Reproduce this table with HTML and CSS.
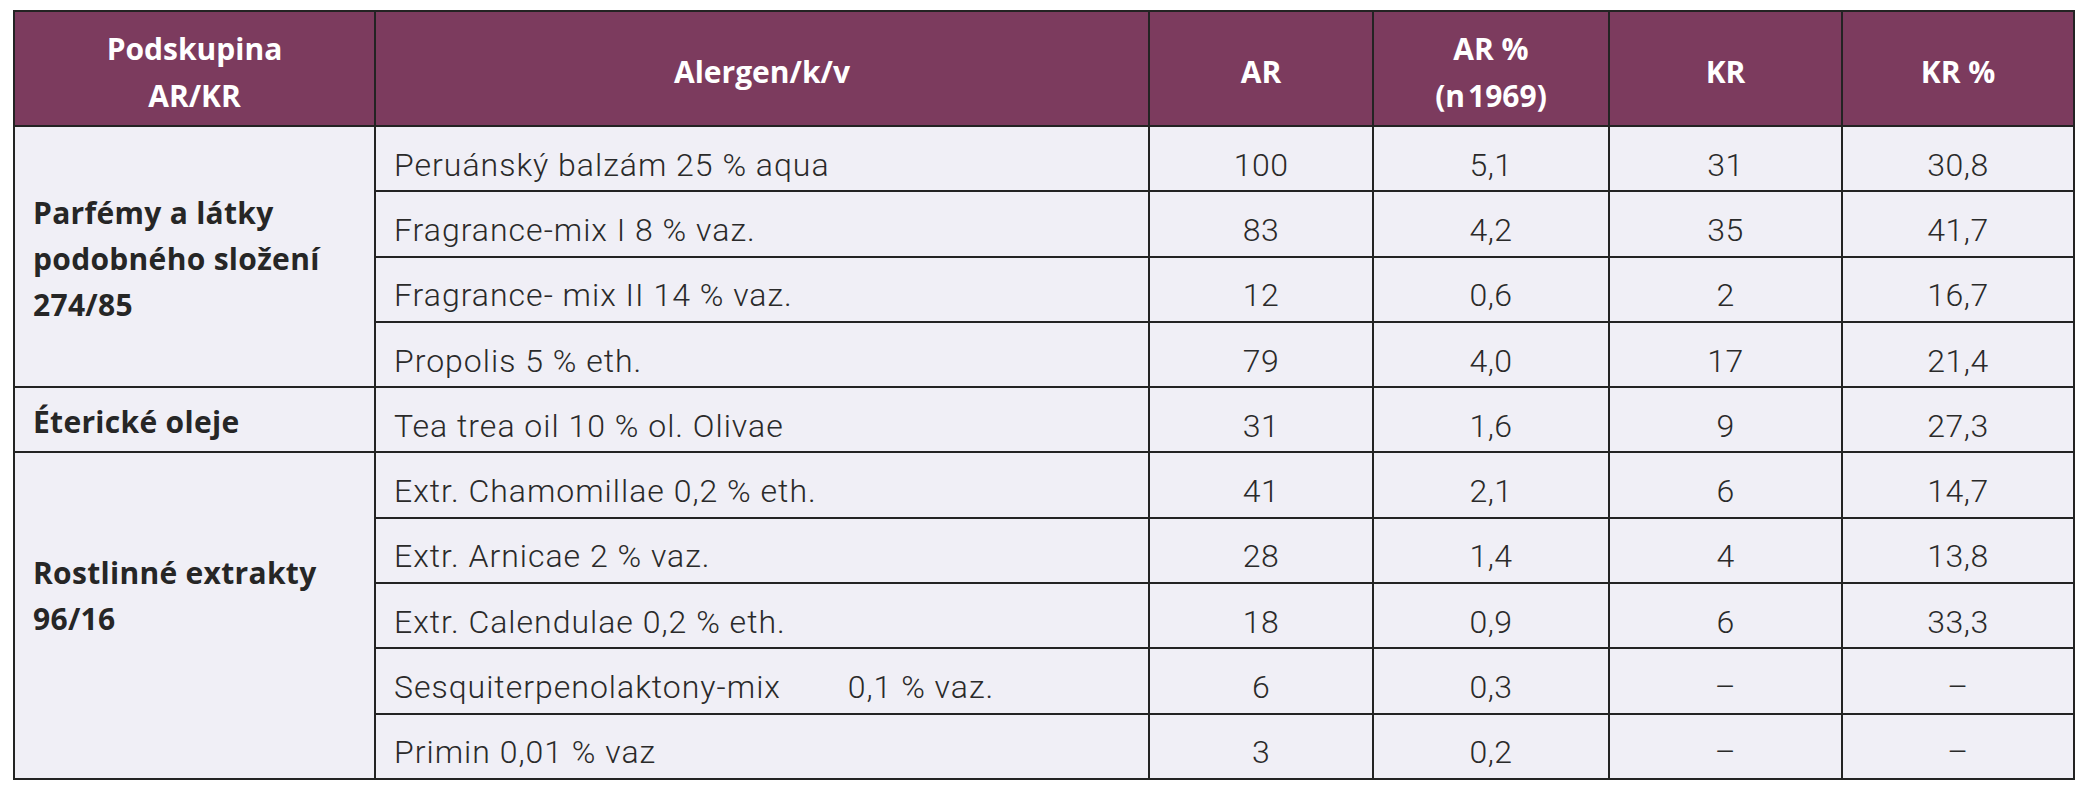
FILE: index.html
```html
<!DOCTYPE html>
<html lang="cs">
<head>
<meta charset="utf-8">
<title>Podskupina AR/KR</title>
<link rel="stylesheet" href="styles.css">
</head>
<body>
<table class="data">
  <colgroup>
    <col class="c-group">
    <col class="c-alergen">
    <col class="c-ar">
    <col class="c-arp">
    <col class="c-kr">
    <col class="c-krp">
  </colgroup>
  <thead>
    <tr class="head-row">
      <th>Podskupina<br>AR/KR</th>
      <th>Alergen/k/v</th>
      <th>AR</th>
      <th>AR %<br>(n&#8202;1969)</th>
      <th>KR</th>
      <th>KR %</th>
    </tr>
  </thead>
  <tbody>
    <tr>
      <td class="group" rowspan="4">Parfémy a látky<br>podobného složení<br>274/85</td>
      <td class="name">Peruánský balzám 25 % aqua</td>
      <td class="num">100</td><td class="num">5,1</td><td class="num">31</td><td class="num">30,8</td>
    </tr>
    <tr>
      <td class="name">Fragrance-mix I 8 % vaz.</td>
      <td class="num">83</td><td class="num">4,2</td><td class="num">35</td><td class="num">41,7</td>
    </tr>
    <tr>
      <td class="name">Fragrance- mix II 14 % vaz.</td>
      <td class="num">12</td><td class="num">0,6</td><td class="num">2</td><td class="num">16,7</td>
    </tr>
    <tr>
      <td class="name">Propolis 5 % eth.</td>
      <td class="num">79</td><td class="num">4,0</td><td class="num">17</td><td class="num">21,4</td>
    </tr>
    <tr>
      <td class="group">Éterické oleje</td>
      <td class="name">Tea trea oil 10 % ol. Olivae</td>
      <td class="num">31</td><td class="num">1,6</td><td class="num">9</td><td class="num">27,3</td>
    </tr>
    <tr>
      <td class="group group-raised" rowspan="5">Rostlinné extrakty<br>96/16</td>
      <td class="name">Extr. Chamomillae 0,2 % eth.</td>
      <td class="num">41</td><td class="num">2,1</td><td class="num">6</td><td class="num">14,7</td>
    </tr>
    <tr>
      <td class="name">Extr. Arnicae 2 % vaz.</td>
      <td class="num">28</td><td class="num">1,4</td><td class="num">4</td><td class="num">13,8</td>
    </tr>
    <tr>
      <td class="name">Extr. Calendulae 0,2 % eth.</td>
      <td class="num">18</td><td class="num">0,9</td><td class="num">6</td><td class="num">33,3</td>
    </tr>
    <tr>
      <td class="name">Sesquiterpenolaktony-mix <span class="conc">0,1 % vaz.</span></td>
      <td class="num">6</td><td class="num">0,3</td><td class="num">–</td><td class="num">–</td>
    </tr>
    <tr>
      <td class="name">Primin 0,01 % vaz</td>
      <td class="num">3</td><td class="num">0,2</td><td class="num">–</td><td class="num">–</td>
    </tr>
  </tbody>
</table>
</body>
</html>
```
FILE: styles.css
```css
html, body {
  margin: 0;
  background: #ffffff;
}
body {
  padding: 10px 0 0 13px;
  font-family: Roboto, "Liberation Sans", Arial, sans-serif;
}
.data {
  border-collapse: collapse;
  table-layout: fixed;
  width: 2060px;
  background: #f0eff6;
  color: #2a2a2a;
  font-size: 32px;
}
.c-group { width: 361px; }
.c-alergen { width: 774px; }
.c-ar { width: 224px; }
.c-arp { width: 236px; }
.c-kr { width: 233px; }
.c-krp { width: 232px; }

.data th,
.data td {
  border: 2px solid #232323;
  padding: 0 18px;
}
.head-row {
  height: 115px;
}
.head-row th {
  background: #7c3b5e;
  color: #ffffff;
  font-family: "Open Sans", "Liberation Sans", Arial, sans-serif;
  font-weight: 700;
  font-size: 30px;
  line-height: 47px;
  text-align: center;
  vertical-align: middle;
  padding-top: 6px;
}
.data tbody tr {
  height: 65.3px;
}
.data td {
  font-weight: 300;
  line-height: 36px;
  letter-spacing: 1px;
  vertical-align: middle;
  padding-top: 12px;
}
.data td.group {
  font-family: "Open Sans", "Liberation Sans", Arial, sans-serif;
  font-weight: 700;
  font-size: 30px;
  letter-spacing: 0.3px;
  line-height: 46px;
  color: #262626;
  padding-top: 4px;
}
.data td.group-raised {
  padding-bottom: 44px;
}
.data td.num {
  text-align: center;
  letter-spacing: 0.5px;
}
.conc {
  margin-left: 58px;
}
```
